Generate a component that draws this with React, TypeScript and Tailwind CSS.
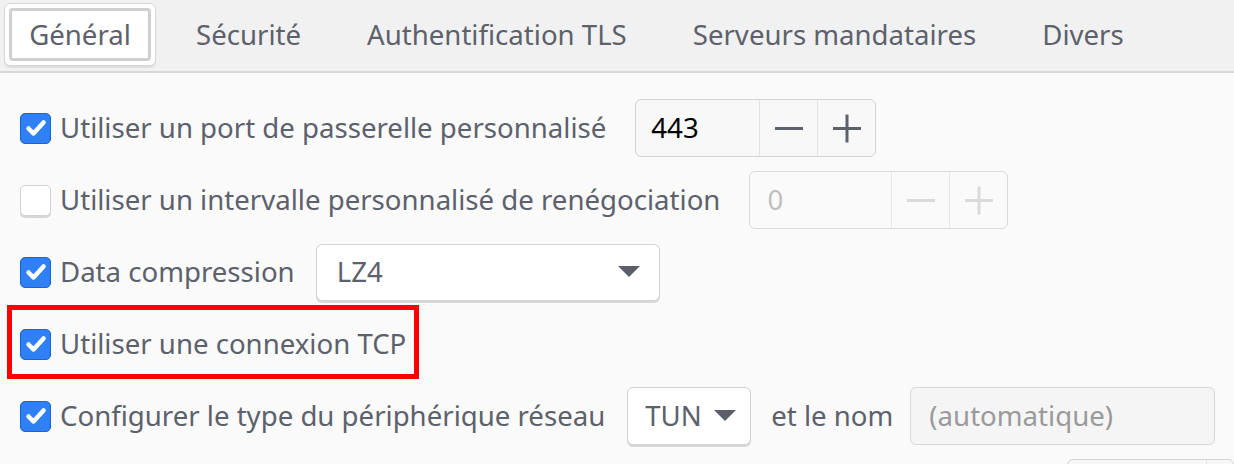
import React from "react";

const Check = ({ checked }: { checked: boolean }) =>
  checked ? (
    <div className="w-[31px] h-[31px] shrink-0 rounded-[5px] bg-[#2f7ff5] border border-[#1b62d6] flex items-center justify-center">
      <svg width="22" height="22" viewBox="0 0 22 22">
        <path d="M3.5 11.5 L8.5 16.5 L18.5 5.5" fill="none" stroke="white" strokeWidth="4.5" strokeLinecap="round" strokeLinejoin="round" />
      </svg>
    </div>
  ) : (
    <div className="w-[31px] h-[31px] shrink-0 rounded-[5px] bg-white border border-[#d2d2d2] shadow-[0_2px_0_#d6d6d6]" />
  );

const Minus = ({ c }: { c: string }) => (
  <svg width="30" height="30" viewBox="0 0 30 30">
    <rect x="1" y="14" width="28" height="3" fill={c} />
  </svg>
);
const Plus = ({ c }: { c: string }) => (
  <svg width="30" height="30" viewBox="0 0 30 30">
    <rect x="1" y="14" width="28" height="3" fill={c} />
    <rect x="13.5" y="1.5" width="3" height="28" fill={c} />
  </svg>
);

const Arrow = () => (
  <svg width="22" height="12" viewBox="0 0 22 12">
    <path d="M0 0 L22 0 L11 11 Z" fill="#5c5f6a" />
  </svg>
);

export default function App() {
  return (
    <div className="w-[1234px] h-[464px] overflow-hidden bg-[#fafafa] text-[#5c616c] font-['Noto_Sans',sans-serif] text-[27.6px]">
      {/* tab bar */}
      <div className="h-[73px] bg-[#f1f1f1] border-b-2 border-[#d9d9d9] flex items-start pt-[3px] pl-[4px]">
        <div className="w-[152px] h-[63px] rounded-[6px] border border-[#d6d6d6] bg-white p-[4px] shadow-[0_2px_1px_rgba(0,0,0,0.08)]">
          <div className="w-full h-full rounded-[4px] border-[3px] border-[#d0d0d3] bg-white flex items-center justify-center">
            Général
          </div>
        </div>
        <div className="h-[63px] flex items-center ml-[40px] gap-[66px]">
          <span>Sécurité</span>
          <span>Authentification TLS</span>
          <span>Serveurs mandataires</span>
          <span>Divers</span>
        </div>
      </div>

      {/* content */}
      <div className="flex flex-col gap-[14px] pt-[26px]">
        {/* row 1 */}
        <div className="h-[58px] flex items-center pl-[20px]">
          <Check checked />
          <span className="ml-[9px]">Utiliser un port de passerelle personnalisé</span>
          <div className="ml-[29px] h-[58px] w-[241px] flex rounded-[6px] border border-[#d4d4d4] bg-[#f8f8f8]">
            <div className="w-[123px] flex items-center pl-[15px] text-black">443</div>
            <div className="w-[58px] border-l border-[#e2e2e2] flex items-center justify-center"><Minus c="#5c616c" /></div>
            <div className="flex-1 border-l border-[#e2e2e2] flex items-center justify-center"><Plus c="#5c616c" /></div>
          </div>
        </div>
        {/* row 2 */}
        <div className="h-[58px] flex items-center pl-[20px]">
          <Check checked={false} />
          <span className="ml-[9px]">Utiliser un intervalle personnalisé de renégociation</span>
          <div className="ml-[29px] h-[58px] w-[259px] flex rounded-[6px] border border-[#dcdcdc] bg-[#fafafa]">
            <div className="w-[141px] flex items-center pl-[17px] text-[#bfbfbf]">0</div>
            <div className="w-[58px] border-l border-[#e6e6e6] flex items-center justify-center"><Minus c="#dadada" /></div>
            <div className="flex-1 border-l border-[#e6e6e6] flex items-center justify-center"><Plus c="#dadada" /></div>
          </div>
        </div>
        {/* row 3 */}
        <div className="h-[58px] flex items-center pl-[20px]">
          <Check checked />
          <span className="ml-[9px]">Data compression</span>
          <div className="ml-[21px] h-[57px] w-[344px] flex items-center justify-between rounded-[6px] border border-[#d2d2d2] bg-white shadow-[0_2px_0_#d8d8d8] pl-[20px] pr-[19px]">
            <span>LZ4</span>
            <Arrow />
          </div>
        </div>
        {/* row 4 */}
        <div className="h-[58px] flex items-center">
          <div className="ml-[7px] w-[412px] h-[74px] mt-[-10px] mb-[-6px] border-[5px] border-[#ff0000] flex items-center pl-[8px] pt-[4px]">
            <Check checked />
            <span className="ml-[9px]">Utiliser une connexion TCP</span>
          </div>
        </div>
        {/* row 5 */}
        <div className="h-[58px] flex items-center pl-[20px]">
          <Check checked />
          <span className="ml-[9px]">Configurer le type du périphérique réseau</span>
          <div className="ml-[22px] h-[58px] w-[124px] flex items-center justify-between rounded-[6px] border border-[#d2d2d2] bg-white shadow-[0_2px_0_#d8d8d8] pl-[17px] pr-[14px]">
            <span>TUN</span>
            <Arrow />
          </div>
          <span className="ml-[20px]">et le nom</span>
          <div className="ml-[17px] h-[58px] w-[305px] flex items-center rounded-[6px] border border-[#d8d8d8] bg-[#f5f5f5] pl-[18px] text-[#9a9a9a]">
            (automatique)
          </div>
        </div>
        {/* row 6 (partially visible) */}
        <div className="h-[58px] flex items-start pl-[1067px]">
          <div className="h-[58px] w-[200px] flex rounded-[6px] border border-[#d4d4d4] bg-[#f8f8f8]">
            <div className="w-[138px]" />
            <div className="flex-1 border-l border-[#e2e2e2]" />
          </div>
        </div>
      </div>
    </div>
  );
}
